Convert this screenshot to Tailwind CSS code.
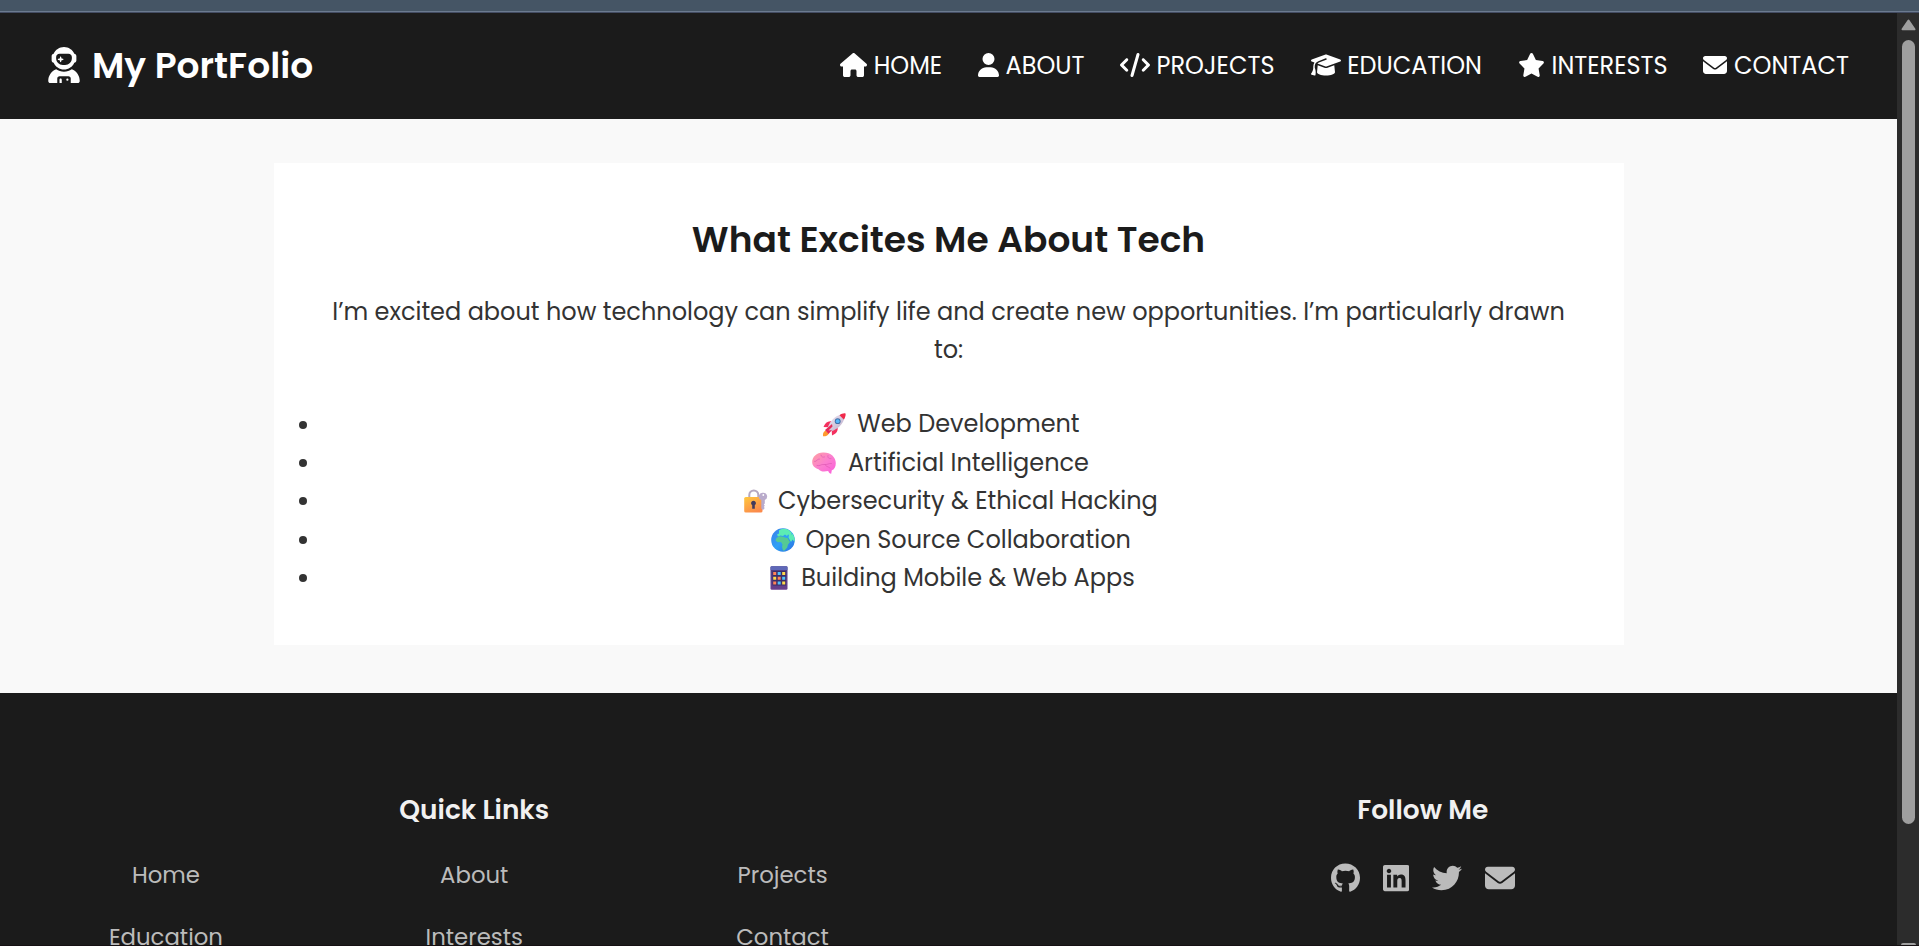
<!DOCTYPE html>
<html lang="en">
<head>
<meta charset="utf-8">
<title>My PortFolio</title>
<script src="https://cdn.jsdelivr.net/npm/@tailwindcss/browser@4"></script>
</head>
<body class="h-screen overflow-hidden flex flex-col bg-[#1b1b1b] font-['Poppins','Inter',sans-serif]">
<div class="h-[13px] shrink-0 bg-[#455565] flex flex-col justify-end">
  <div class="h-px bg-[#6b7a8f]"></div><div class="h-px bg-[#434c62]"></div>
</div>
<div class="flex-1 min-h-0 flex">
  <div class="w-[1897px] h-full overflow-hidden flex flex-col bg-[#f9f9f9]">
    <header class="h-[106px] shrink-0 bg-[#1b1b1b] text-white flex items-center justify-between pl-12 pr-12 pb-[1px]">
      <div class="flex items-center gap-[12px]">
        <svg class="w-[32px] h-[36px] mb-[1px]" viewBox="0 0 448 512" fill="currentColor"><path d="M370.7 96.1C346.1 39.5 289.7 0 224 0S101.9 39.5 77.3 96.1C60.9 97.5 48 111.2 48 128l0 64c0 16.8 12.9 30.5 29.3 31.9C101.9 280.5 158.3 320 224 320s122.1-39.5 146.7-96.1c16.4-1.4 29.3-15.1 29.3-31.9l0-64c0-16.8-12.9-30.5-29.3-31.9zM336 144l0 16c0 53-43 96-96 96l-32 0c-53 0-96-43-96-96l0-16c0-26.5 21.5-48 48-48l128 0c26.5 0 48 21.5 48 48zM189.3 162.7l-6-21.2c-.9-3.3-3.9-5.5-7.3-5.5s-6.4 2.2-7.3 5.5l-6 21.2-21.2 6c-3.3 .9-5.5 3.9-5.5 7.3s2.2 6.4 5.5 7.3l21.2 6 6 21.2c.9 3.3 3.9 5.5 7.3 5.5s6.4-2.2 7.3-5.5l6-21.2 21.2-6c3.3-.9 5.5-3.9 5.5-7.3s-2.2-6.4-5.5-7.3l-21.2-6zM112.7 316.5C46.7 342.6 0 407 0 482.3C0 498.7 13.3 512 29.7 512l98.3 0 0-64c0-17.7 14.3-32 32-32l128 0c17.7 0 32 14.3 32 32l0 64 98.3 0c16.4 0 29.7-13.3 29.7-29.7c0-75.3-46.7-139.7-112.7-165.8C303.9 338.8 265.5 352 224 352s-79.9-13.2-111.3-35.5zM176 448c-8.8 0-16 7.2-16 16l0 48 32 0 0-48c0-8.8-7.2-16-16-16zm96 32a16 16 0 1 0 0-32 16 16 0 1 0 0 32z"/></svg>
        <span class="text-[36px] leading-[54px] font-semibold whitespace-nowrap">My PortFolio</span>
      </div>
      <nav class="w-[1009px] flex text-[24px] leading-9 whitespace-nowrap pb-[1px] [&_span]:pt-[2px]">
        <a class="w-[138px] flex items-center gap-[6.7px]"><svg class="w-[27px] h-6 shrink-0" viewBox="0 0 576 512" fill="currentColor"><path d="M575.8 255.5c0 18-15 32.1-32 32.1l-32 0 .7 160.2c0 2.7-.2 5.4-.5 8.1l0 16.2c0 22.1-17.9 40-40 40l-16 0c-1.1 0-2.2 0-3.3-.1c-1.4 .1-2.8 .1-4.2 .1L416 512l-24 0c-22.1 0-40-17.9-40-40l0-24 0-64c0-17.7-14.3-32-32-32l-64 0c-17.7 0-32 14.3-32 32l0 64 0 24c0 22.1-17.9 40-40 40l-24 0-31.9 0c-1.5 0-3-.1-4.5-.2c-1.2 .1-2.4 .2-3.6 .2l-16 0c-22.1 0-40-17.9-40-40l0-112c0-.9 0-1.9 .1-2.8l0-69.7-32 0c-18 0-32-14-32-32.1c0-9 3-17 10-24L266.4 8c7-7 15-8 22-8s15 2 21 7L564.8 231.5c8 7 12 15 11 24z"/></svg><span>HOME</span></a>
        <a class="w-[142px] flex items-center gap-[6.5px]"><svg class="w-[21px] h-6 shrink-0" viewBox="0 0 448 512" fill="currentColor"><path d="M224 256A128 128 0 1 0 224 0a128 128 0 1 0 0 256zm-45.7 48C79.8 304 0 383.8 0 482.3C0 498.7 13.3 512 29.7 512l388.6 0c16.4 0 29.7-13.3 29.7-29.7C448 383.8 368.2 304 269.7 304l-91.4 0z"/></svg><span>ABOUT</span></a>
        <a class="w-[190.5px] flex items-center gap-[6.5px]"><svg class="w-[30px] h-6 shrink-0" viewBox="0 0 640 512" fill="currentColor"><path d="M392.8 1.2c-17-4.9-34.7 5-39.6 22l-128 448c-4.9 17 5 34.7 22 39.6s34.7-5 39.6-22l128-448c4.9-17-5-34.7-22-39.6zm80.6 120.1c-12.5 12.5-12.5 32.8 0 45.3L562.7 256l-89.4 89.4c-12.5 12.5-12.5 32.8 0 45.3s32.8 12.5 45.3 0l112-112c12.5-12.5 12.5-32.8 0-45.3l-112-112c-12.5-12.5-32.8-12.5-45.3 0zm-306.7 0c-12.5-12.5-32.8-12.5-45.3 0l-112 112c-12.5 12.5-12.5 32.8 0 45.3l112 112c12.5 12.5 32.8 12.5 45.3 0s12.5-32.8 0-45.3L77.3 256l89.4-89.4c12.5-12.5 12.5-32.8 0-45.3z"/></svg><span>PROJECTS</span></a>
        <a class="w-[207.5px] flex items-center gap-[6.7px]"><svg class="w-[30px] h-6 shrink-0" viewBox="0 0 640 512" fill="currentColor"><path d="M320 32c-8.1 0-16.1 1.4-23.7 4.1L15.8 137.4C6.3 140.9 0 149.9 0 160s6.3 19.1 15.8 22.6l57.9 20.9C57.3 229.3 48 259.8 48 291.9l0 28.1c0 28.4-10.8 57.7-22.3 80.8c-6.5 13-13.9 25.8-22.5 37.6C0 442.7-.9 448.3 .9 453.4s6 8.9 11.2 10.2l64 16c4.2 1.1 8.7 .3 12.4-2s6.3-6.1 7.1-10.4c8.6-42.8 4.3-81.2-2.1-108.7C90.3 344.3 86 329.8 80 316.5l0-24.6c0-30.2 10.2-58.7 27.9-81.5c12.9-15.5 29.6-28 49.2-35.7l157-61.7c8.2-3.2 17.5 .8 20.7 9s-.8 17.5-9 20.7l-157 61.7c-12.4 4.9-23.3 12.4-32.2 21.6l159.6 57.6c7.6 2.7 15.6 4.1 23.7 4.1s16.1-1.4 23.7-4.1L624.2 182.6c9.5-3.4 15.8-12.5 15.8-22.6s-6.3-19.1-15.8-22.6L343.7 36.1C336.1 33.4 328.1 32 320 32zM128 408c0 35.3 86 72 192 72s192-36.7 192-72L496.7 262.6 354.5 314c-11.1 4-22.8 6-34.5 6s-23.5-2-34.5-6L143.3 262.6 128 408z"/></svg><span>EDUCATION</span></a>
        <a class="w-[185.3px] flex items-center gap-[6.5px]"><svg class="w-[27px] h-6 shrink-0" viewBox="0 0 576 512" fill="currentColor"><path d="M316.9 18C311.6 7 300.4 0 288.1 0s-23.4 7-28.8 18L195 150.3 51.4 171.5c-12 1.8-22 10.2-25.7 21.7s-.7 24.2 7.9 32.7L137.8 329 113.2 474.7c-2 12 3 24.2 12.9 31.3s23 8 33.8 2.3l128.3-68.5 128.3 68.5c10.8 5.7 23.9 4.9 33.8-2.3s14.9-19.3 12.9-31.3L438.5 329 542.7 225.9c8.6-8.5 11.7-21.2 7.9-32.7s-13.7-19.9-25.7-21.7L381.2 150.3 316.9 18z"/></svg><span>INTERESTS</span></a>
        <a class="flex items-center gap-[6.7px]"><svg class="w-6 h-6 shrink-0" viewBox="0 0 512 512" fill="currentColor"><path d="M48 64C21.5 64 0 85.5 0 112c0 15.1 7.1 29.3 19.2 38.4L236.8 313.6c11.4 8.5 27 8.5 38.4 0L492.8 150.4c12.1-9.1 19.2-23.3 19.2-38.4c0-26.5-21.5-48-48-48L48 64zM0 176L0 384c0 35.3 28.7 64 64 64l384 0c35.3 0 64-28.7 64-64l0-208L294.4 339.2c-22.8 17.1-54 17.1-76.8 0L0 176z"/></svg><span>CONTACT</span></a>
      </nav>
    </header>

    <main class="h-[574px] shrink-0 pt-11 flex justify-center">
      <section class="w-[1350px] h-[482px] bg-white text-[#333] pt-[48px] text-[24px] leading-[38.4px]">
        <h2 class="text-center text-[#1b1b1b] text-[36px] leading-[57.6px] font-semibold">What Excites Me About Tech</h2>
        <p class="mt-[24.4px] px-[50px] text-center">I’m excited about how technology can simplify life and create new opportunities. I’m particularly drawn to:</p>
        <ul class="mt-[35.6px] pl-[25px] pr-[28.6px] whitespace-nowrap">
          <li class="flex items-center">
            <span class="size-2 rounded-full bg-[#333]"></span>
            <span class="flex-1 flex items-center justify-center gap-[11.5px]">
              <svg class="size-6" viewBox="0 0 24 24"><defs><linearGradient id="rk" x1="0" y1="0" x2="1" y2="1"><stop offset="0" stop-color="#f4eef8"/><stop offset="1" stop-color="#b7a6c4"/></linearGradient></defs><path d="M3.5 17.5C1 19 .8 21 1 23.3c2.3.2 4.5-.2 5.8-2.8z" fill="#ff9a2e"/><path d="M10 8.5C6 7.5 3 10 1.5 14l5 .3zM15.5 14c1 4-1.5 7-5.5 8.5l-.3-5z" fill="#f4305e"/><path d="M5 18.8C5.5 10 13 2 20.5 1.2l2.3 2.3C22 11 14 18.5 5.2 19z" fill="url(#rk)"/><path d="M17.5 2.2C19.5 .8 22 0 23.5.5 24 2 23.2 4.5 21.8 6.5z" fill="#f02a4b"/><path d="M3 17l7-6 .5 2.5-4 4L10 17l-3.5 4z" fill="#e52a58"/><circle cx="15.7" cy="8.2" r="2.9" fill="#3f6fa8"/><circle cx="15.7" cy="8.2" r="1.9" fill="#57b7fa"/></svg>
              <span>Web Development</span></span>
          </li>
          <li class="flex items-center">
            <span class="size-2 rounded-full bg-[#333]"></span>
            <span class="flex-1 flex items-center justify-center gap-[11.5px]">
              <svg class="size-6" viewBox="0 0 24 24"><defs><linearGradient id="br" x1="0" y1="0" x2="1" y2="1"><stop offset="0" stop-color="#ffa1a0"/><stop offset=".5" stop-color="#fb80cf"/><stop offset="1" stop-color="#fb5ddb"/></linearGradient></defs><path d="M.2 11C.2 6 4.5 1.7 11 1.5c7.5-.3 12.8 4.5 12.8 10.5 0 4-1.5 6.500-4 7.300L19.200 22.800c-1.800-.3-2.500-1.600-3-2.800-4 .8-7.500.8-9.700-1.800C2.500 17 .2 14.500.2 11z" fill="url(#br)"/><path d="M2.500 10.500c2.500.5 2.500-3 5-2.500M9 4c0 2 2 2.500 3.500 2M16 4.500c-1 2 1 3.500 3 3M5 14.500c3 1 4-1.500 7-1 3 .6 5-1.500 7.500-1M13 13.500c.5 2 3 2 5 3.500" fill="none" stroke="#e05cb4" stroke-width=".7" stroke-linecap="round"/></svg>
              <span>Artificial Intelligence</span></span>
          </li>
          <li class="flex items-center">
            <span class="size-2 rounded-full bg-[#333]"></span>
            <span class="flex-1 flex items-center justify-center gap-[10.5px]">
              <svg class="size-6" viewBox="0 0 24 24"><defs><linearGradient id="lk" x1="0" y1="0" x2=".6" y2="1"><stop offset="0" stop-color="#ffc83d"/><stop offset="1" stop-color="#fb8a4c"/></linearGradient></defs><path d="M5.300 10V6a4.500 4.500 0 0 1 9 0v4" fill="none" stroke="#b5a8c0" stroke-width="2"/><rect x=".2" y="8" width="18.300" height="15.500" rx="1.600" fill="url(#lk)"/><path d="M9.500 11.700a2.500 2.500 0 0 1 1.300 4.600v3.500h-2.600v-3.500a2.500 2.500 0 0 1 1.300-4.600z" fill="#433b5c"/><path d="M19.300 3.800a3.800 3.800 0 0 1 1.500 7.300v3.400l-1 1 1 1.200-1 1.200 1 1.200-1.800 1.900-1.700-1.500v-8.400a3.800 3.800 0 0 1 2-7.300z" fill="#b9abcb"/><circle cx="19.300" cy="6" r=".9" fill="#fff"/></svg>
              <span>Cybersecurity &amp; Ethical Hacking</span></span>
          </li>
          <li class="flex items-center">
            <span class="size-2 rounded-full bg-[#333]"></span>
            <span class="flex-1 flex items-center justify-center gap-[11px]">
              <svg class="size-6" viewBox="0 0 24 24"><defs><linearGradient id="gl" x1="0" y1="0" x2="1" y2="1"><stop offset="0" stop-color="#3a7fe8"/><stop offset=".5" stop-color="#2fa0f6"/><stop offset="1" stop-color="#2a6fe0"/></linearGradient><clipPath id="gc"><circle cx="12" cy="12" r="11.800"/></clipPath></defs><circle cx="12" cy="12" r="11.800" fill="url(#gl)"/><g clip-path="url(#gc)" fill="#5cecb4"><path d="M8 2.500C10 .5 14 .2 17 1.500l4 3.500-1.500 2.500-2.500-1-1 1.500-2-1.500-2 1.500-2.500-.5-2.500 1-1-2 2-1z"/><path d="M5.500 10l3-1.800 3.500.6 2.500 1 2 .2 2.500 4-2 2.500-.8 3-2.700 3h-1.500l-1-3.500.5-2.500-1.500-2.500-3.500.2-2-2z" fill="#55c994"/><path d="M18 7l4-1 2 5-.5 3-2-2.500-1.500 2.500-2.500-4.500z"/></g></svg>
              <span>Open Source Collaboration</span></span>
          </li>
          <li class="flex items-center">
            <span class="size-2 rounded-full bg-[#333]"></span>
            <span class="flex-1 flex items-center justify-center gap-[10.5px]">
              <svg class="size-6" viewBox="0 0 24 24"><defs><linearGradient id="ph" x1="0" y1="0" x2="0" y2="1"><stop offset="0" stop-color="#4a3f83"/><stop offset="1" stop-color="#693f8d"/></linearGradient></defs><rect x="3.500" y=".3" width="17" height="23.500" rx="1.300" fill="url(#ph)"/><path d="M3.500 4V1.600A1.300 1.300 0 0 1 4.800.3h14.400a1.300 1.300 0 0 1 1.300 1.300V4z" fill="#5f68b8"/><rect x="5.500" y="5" width="13.500" height="14.500" fill="#3b2e69"/><g fill="#ff8257"><path d="M6.200 6h3v3h-3zM10.700 10.700h3v3h-3zM6.200 15.500h3v3h-3z"/></g><g fill="#4fc3fb"><path d="M10.700 6h3v3h-3zM15.200 10.700h3v3h-3zM10.700 15.500h3v3h-3z"/></g><g fill="#ffd84a"><path d="M15.200 6h3v3h-3zM6.200 10.700h3v3h-3zM15.200 15.500h3v3h-3z"/></g></svg>
              <span>Building Mobile &amp; Web Apps</span></span>
          </li>
        </ul>
      </section>
    </main>

    <footer class="flex-1 min-h-0 overflow-hidden bg-[#1b1b1b] pt-[96px] grid grid-cols-2 text-center">
      <div class="flex flex-col items-center">
        <h3 class="text-[#f1f1f1] text-[26.4px] leading-[42.2px] font-semibold">Quick Links</h3>
        <div class="mt-[26px] w-[925px] grid grid-cols-3 gap-y-[25.5px] text-[22.8px] leading-[36.5px] text-[#bbb]">
          <a>Home</a><a>About</a><a>Projects</a>
          <a>Education</a><a>Interests</a><a>Contact</a>
        </div>
      </div>
      <div class="flex flex-col items-center">
        <h3 class="text-[#f1f1f1] text-[26.4px] leading-[42.2px] font-semibold">Follow Me</h3>
        <div class="mt-[31.5px] flex items-center gap-[22.8px] text-[#bbb]">
          <svg class="h-[30px] w-[29px]" viewBox="0 0 496 512" fill="currentColor"><path d="M165.900 397.400c0 2-2.300 3.600-5.200 3.600-3.300.3-5.600-1.300-5.600-3.600 0-2 2.300-3.600 5.200-3.600 3-.3 5.600 1.300 5.600 3.600zm-31.100-4.500c-.7 2 1.300 4.300 4.300 4.900 2.600 1 5.600 0 6.200-2s-1.300-4.300-4.300-5.200c-2.600-.7-5.500.3-6.200 2.300zm44.200-1.700c-2.900.7-4.900 2.600-4.600 4.900.3 2 2.900 3.300 5.900 2.600 2.900-.7 4.900-2.600 4.600-4.600-.3-1.900-3-3.200-5.900-2.900zM244.800 8C106.100 8 0 113.300 0 252c0 110.900 69.800 205.800 169.500 239.200 12.800 2.300 17.300-5.600 17.300-12.100 0-6.200-.3-40.400-.3-61.400 0 0-70 15-84.700-29.800 0 0-11.400-29.100-27.800-36.600 0 0-22.900-15.700 1.600-15.400 0 0 24.900 2 38.600 25.800 21.900 38.600 58.600 27.500 72.900 20.900 2.300-16 8.800-27.100 16-33.700-55.900-6.200-112.300-14.300-112.300-110.500 0-27.500 7.600-41.300 23.600-58.900-2.600-6.500-11.100-33.300 2.600-67.900 20.900-6.500 69 27 69 27 20-5.600 41.500-8.500 62.800-8.500s42.800 2.900 62.800 8.500c0 0 48.100-33.600 69-27 13.700 34.700 5.200 61.400 2.600 67.900 16 17.700 25.800 31.500 25.800 58.900 0 96.500-58.900 104.200-114.800 110.500 9.200 7.900 17 22.900 17 46.400 0 33.700-.3 75.400-.3 83.600 0 6.500 4.600 14.400 17.300 12.100C428.200 457.800 496 362.900 496 252 496 113.300 383.500 8 244.800 8zM97.200 352.900c-1.300 1-1 3.300.7 5.200 1.600 1.600 3.900 2.300 5.200 1 1.300-1 1-3.300-.7-5.200-1.600-1.600-3.900-2.300-5.200-1zm-10.800-8.100c-.7 1.300.3 2.900 2.300 3.900 1.600 1 3.600.7 4.300-.7.7-1.300-.3-2.900-2.300-3.900-2-.6-3.600-.3-4.300.7zm32.400 35.600c-1.600 1.300-1 4.300 1.300 6.200 2.300 2.300 5.200 2.600 6.500 1 1.300-1.300.7-4.300-1.300-6.200-2.200-2.300-5.200-2.600-6.500-1zm-11.400-14.700c-1.600 1-1.600 3.600 0 5.900 1.600 2.300 4.300 3.300 5.600 2.300 1.600-1.300 1.600-3.900 0-6.200-1.400-2.300-4-3.300-5.600-2z"/></svg>
          <svg class="h-[30px] w-[26.25px]" viewBox="0 0 448 512" fill="currentColor"><path d="M416 32H31.900C14.300 32 0 46.500 0 64.300v383.400C0 465.500 14.300 480 31.900 480H416c17.600 0 32-14.500 32-32.300V64.300c0-17.800-14.400-32.300-32-32.300zM135.400 416H69V202.200h66.500V416zm-33.200-243c-21.300 0-38.500-17.300-38.500-38.500S80.900 96 102.200 96c21.200 0 38.500 17.300 38.500 38.500 0 21.300-17.200 38.500-38.500 38.500zm282.100 243h-66.400V312c0-24.800-.5-56.700-34.500-56.700-34.600 0-39.900 27-39.900 54.900V416h-66.400V202.200h63.700v29.200h.9c8.900-16.800 30.600-34.500 62.900-34.500 67.200 0 79.700 44.300 79.700 101.900V416z"/></svg>
          <svg class="size-[30px]" viewBox="0 0 512 512" fill="currentColor"><path d="M459.370 151.716c.325 4.548.325 9.097.325 13.645 0 138.720-105.583 298.558-298.558 298.558-59.452 0-114.680-17.219-161.137-47.106 8.447.974 16.568 1.299 25.340 1.299 49.055 0 94.213-16.568 130.274-44.832-46.132-.975-84.792-31.188-98.112-72.772 6.498.974 12.995 1.624 19.818 1.624 9.421 0 18.843-1.300 27.614-3.573-48.081-9.747-84.143-51.980-84.143-102.985v-1.299c13.969 7.797 30.214 12.670 47.431 13.319-28.264-18.843-46.781-51.005-46.781-87.391 0-19.492 5.197-37.360 14.294-52.954 51.655 63.675 129.300 105.258 216.365 109.807-1.624-7.797-2.599-15.918-2.599-24.040 0-57.828 46.782-104.934 104.934-104.934 30.213 0 57.502 12.670 76.670 33.137 23.715-4.548 46.456-13.320 66.599-25.340-7.798 24.366-24.366 44.833-46.132 57.827 21.117-2.273 41.584-8.122 60.426-16.243-14.292 20.791-32.161 39.308-52.628 54.253z"/></svg>
          <svg class="size-[30px]" viewBox="0 0 512 512" fill="currentColor"><path d="M48 64C21.500 64 0 85.500 0 112c0 15.100 7.100 29.300 19.200 38.400L236.800 313.600c11.400 8.500 27 8.500 38.400 0L492.800 150.400c12.100-9.100 19.200-23.300 19.200-38.400c0-26.500-21.500-48-48-48L48 64zM0 176L0 384c0 35.300 28.700 64 64 64l384 0c35.300 0 64-28.700 64-64l0-208L294.400 339.200c-22.800 17.100-54 17.100-76.800 0L0 176z"/></svg>
        </div>
      </div>
    </footer>
  </div>
  <div class="flex-1 bg-[#2c2c2c] flex flex-col items-center justify-between pt-[6px] pr-[1px] pl-[2px]">
    <div class="flex flex-col items-center gap-[9px]">
      <svg class="w-[15px] h-3" viewBox="0 0 15 12"><path d="M7.500 1.500L13.500 10.300H1.500z" fill="#9f9f9f" stroke="#9f9f9f" stroke-width="2" stroke-linejoin="round"/></svg>
      <div class="w-[13px] h-[784px] rounded-full bg-[#9f9f9f]"></div>
    </div>
    <div class="w-[15px] h-[2px] rounded-t-[2px] bg-[#9f9f9f]"></div>
  </div>
</div>
<div class="h-px shrink-0 bg-[#151013]"></div>
</body>
</html>
